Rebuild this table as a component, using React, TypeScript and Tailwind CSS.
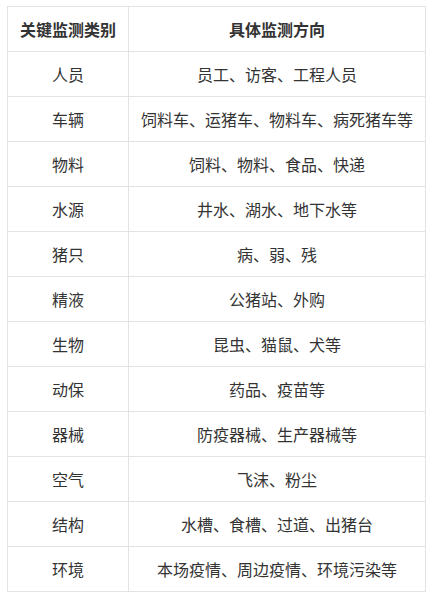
const rows: [string, string][] = [
  ['人员', '员工、访客、工程人员'],
  ['车辆', '饲料车、运猪车、物料车、病死猪车等'],
  ['物料', '饲料、物料、食品、快递'],
  ['水源', '井水、湖水、地下水等'],
  ['猪只', '病、弱、残'],
  ['精液', '公猪站、外购'],
  ['生物', '昆虫、猫鼠、犬等'],
  ['动保', '药品、疫苗等'],
  ['器械', '防疫器械、生产器械等'],
  ['空气', '飞沫、粉尘'],
  ['结构', '水槽、食槽、过道、出猪台'],
  ['环境', '本场疫情、周边疫情、环境污染等'],
];

export default function App() {
  return (
    <div
      className="min-h-screen bg-white pl-[7px] pt-[6px] text-[16px] text-[#333]"
      style={{ fontFamily: '"Microsoft YaHei", "Noto Sans CJK SC", sans-serif' }}
    >
      <table className="w-[419px] border-collapse">
        <thead>
          <tr className="h-[45px]">
            <th className="w-[121px] border border-[#e3e3e3] text-center font-bold">关键监测类别</th>
            <th className="border border-[#e3e3e3] text-center font-bold">具体监测方向</th>
          </tr>
        </thead>
        <tbody>
          {rows.map(([k, v]) => (
            <tr key={k} className="h-[45px]">
              <td className="border border-[#e3e3e3] text-center">{k}</td>
              <td className="border border-[#e3e3e3] text-center">{v}</td>
            </tr>
          ))}
        </tbody>
      </table>
    </div>
  );
}
